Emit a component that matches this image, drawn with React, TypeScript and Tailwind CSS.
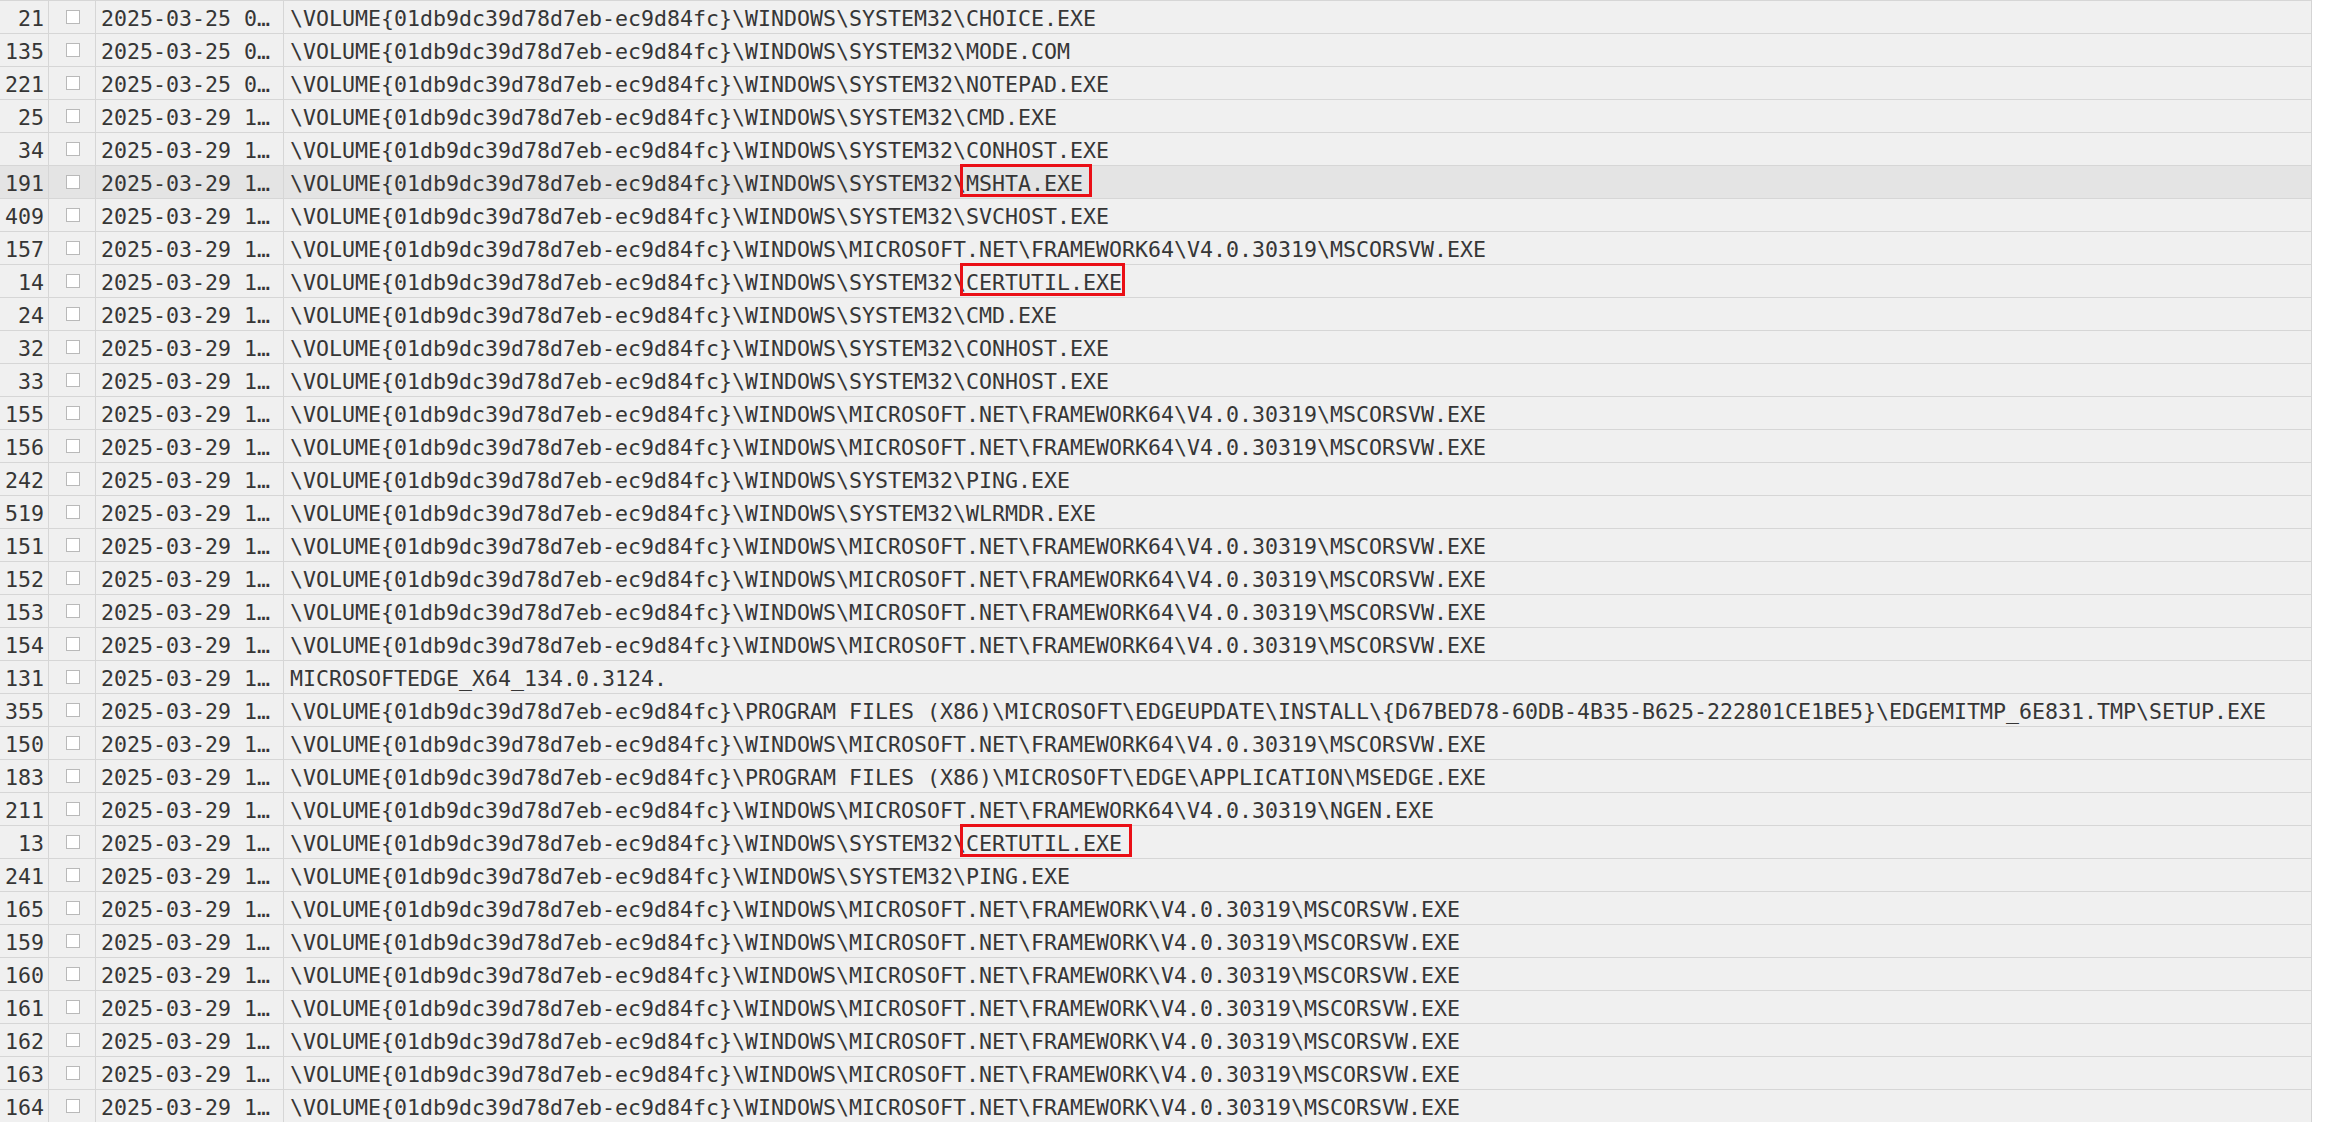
import React from "react";

const VOL = "\\VOLUME{01db9dc39d78d7eb-ec9d84fc}";
const SYS = VOL + "\\WINDOWS\\SYSTEM32\\";
const FW64 = VOL + "\\WINDOWS\\MICROSOFT.NET\\FRAMEWORK64\\V4.0.30319\\";
const FW = VOL + "\\WINDOWS\\MICROSOFT.NET\\FRAMEWORK\\V4.0.30319\\";

type Row = {
  id: string;
  date: string;
  prefix: string;
  file: string;
  box?: number; // right extension of red box
  selected?: boolean;
};

const D25 = "2025-03-25 0\u2026";
const D29 = "2025-03-29 1\u2026";

const rows: Row[] = [
  { id: "21", date: D25, prefix: SYS, file: "CHOICE.EXE" },
  { id: "135", date: D25, prefix: SYS, file: "MODE.COM" },
  { id: "221", date: D25, prefix: SYS, file: "NOTEPAD.EXE" },
  { id: "25", date: D29, prefix: SYS, file: "CMD.EXE" },
  { id: "34", date: D29, prefix: SYS, file: "CONHOST.EXE" },
  { id: "191", date: D29, prefix: SYS, file: "MSHTA.EXE", box: 9, selected: true },
  { id: "409", date: D29, prefix: SYS, file: "SVCHOST.EXE" },
  { id: "157", date: D29, prefix: FW64, file: "MSCORSVW.EXE" },
  { id: "14", date: D29, prefix: SYS, file: "CERTUTIL.EXE", box: 3 },
  { id: "24", date: D29, prefix: SYS, file: "CMD.EXE" },
  { id: "32", date: D29, prefix: SYS, file: "CONHOST.EXE" },
  { id: "33", date: D29, prefix: SYS, file: "CONHOST.EXE" },
  { id: "155", date: D29, prefix: FW64, file: "MSCORSVW.EXE" },
  { id: "156", date: D29, prefix: FW64, file: "MSCORSVW.EXE" },
  { id: "242", date: D29, prefix: SYS, file: "PING.EXE" },
  { id: "519", date: D29, prefix: SYS, file: "WLRMDR.EXE" },
  { id: "151", date: D29, prefix: FW64, file: "MSCORSVW.EXE" },
  { id: "152", date: D29, prefix: FW64, file: "MSCORSVW.EXE" },
  { id: "153", date: D29, prefix: FW64, file: "MSCORSVW.EXE" },
  { id: "154", date: D29, prefix: FW64, file: "MSCORSVW.EXE" },
  { id: "131", date: D29, prefix: "", file: "MICROSOFTEDGE_X64_134.0.3124." },
  {
    id: "355",
    date: D29,
    prefix:
      VOL +
      "\\PROGRAM FILES (X86)\\MICROSOFT\\EDGEUPDATE\\INSTALL\\{D67BED78-60DB-4B35-B625-222801CE1BE5}\\EDGEMITMP_6E831.TMP\\",
    file: "SETUP.EXE",
  },
  { id: "150", date: D29, prefix: FW64, file: "MSCORSVW.EXE" },
  { id: "183", date: D29, prefix: VOL + "\\PROGRAM FILES (X86)\\MICROSOFT\\EDGE\\APPLICATION\\", file: "MSEDGE.EXE" },
  { id: "211", date: D29, prefix: FW64, file: "NGEN.EXE" },
  { id: "13", date: D29, prefix: SYS, file: "CERTUTIL.EXE", box: 10 },
  { id: "241", date: D29, prefix: SYS, file: "PING.EXE" },
  { id: "165", date: D29, prefix: FW, file: "MSCORSVW.EXE" },
  { id: "159", date: D29, prefix: FW, file: "MSCORSVW.EXE" },
  { id: "160", date: D29, prefix: FW, file: "MSCORSVW.EXE" },
  { id: "161", date: D29, prefix: FW, file: "MSCORSVW.EXE" },
  { id: "162", date: D29, prefix: FW, file: "MSCORSVW.EXE" },
  { id: "163", date: D29, prefix: FW, file: "MSCORSVW.EXE" },
  { id: "164", date: D29, prefix: FW, file: "MSCORSVW.EXE" },
];

function FileName({ row }: { row: Row }) {
  if (row.box === undefined) return <span>{row.file}</span>;
  return (
    <span className="relative inline-block">
      {row.file}
      <span
        className="pointer-events-none absolute top-[-5px] bottom-[1px] left-[-6px] border-[3px] border-[#ea0f16]"
        style={{ right: -row.box }}
      />
    </span>
  );
}

export default function App() {
  return (
    <div
      className="h-[1122px] w-full overflow-hidden bg-white text-[#363636]"
      style={{ fontFamily: '"DejaVu Sans Mono", "Liberation Mono", monospace' }}
    >
      <div className="flex w-[2312px] flex-col border-r border-[#d4d4d4]">
        {rows.map((r, i) => (
          <div
            key={i}
            className={
              "flex h-[33px] border-t border-[#d6d6d6] text-[21.6px] leading-[29px] whitespace-nowrap " +
              (r.selected ? "bg-[#e4e4e4]" : "bg-[#f0f0f0]")
            }
          >
            <div className="w-[49px] shrink-0 border-r border-[#d6d6d6] pt-[3px] pr-[4px] text-right">
              {r.id}
            </div>
            <div className="flex w-[47px] shrink-0 items-center justify-center border-r border-[#d6d6d6] pl-[1px]">
              <div className="h-[14px] w-[14px] border border-[#b9b9b9] bg-white" />
            </div>
            <div className="w-[188px] shrink-0 overflow-hidden border-r border-[#d6d6d6] pt-[3px] pl-[5px]">
              {r.date}
            </div>
            <div className="min-w-0 flex-1 pt-[3px] pl-[6px]">
              <span>{r.prefix}</span>
              <FileName row={r} />
            </div>
          </div>
        ))}
      </div>
    </div>
  );
}
